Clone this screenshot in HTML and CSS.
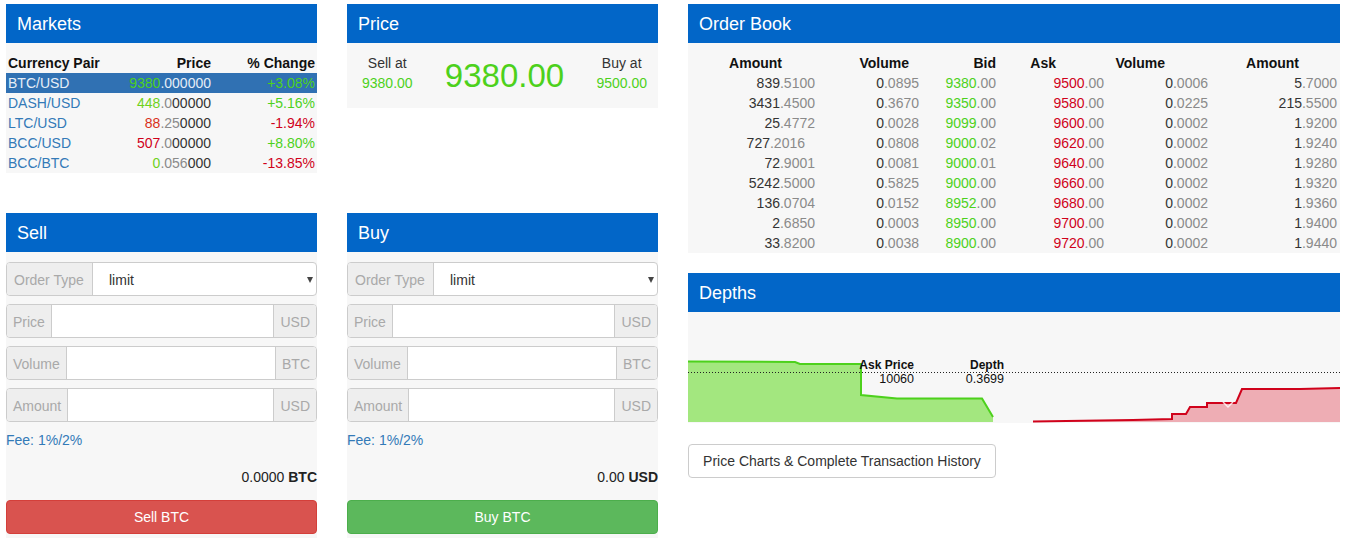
FILE: index.html
```html
<!DOCTYPE html>
<html>
<head>
<meta charset="utf-8">
<link rel="stylesheet" href="styles.css">
</head>
<body>
<div class="page">
  <div class="left">
    <section class="panel markets">
      <div class="panel-head">Markets</div>
      <div class="panel-body">
        <table class="mtable">
          <colgroup><col class="c1"><col class="c2"><col class="c3"></colgroup>
          <thead><tr><th class="l">Currency Pair</th><th>Price</th><th>% Change</th></tr></thead>
          <tbody>
            <tr class="active"><td class="l pair">BTC/USD</td><td><span class="up">9380</span><span class="lite">.000000</span></td><td class="up">+3.08%</td></tr>
            <tr><td class="l pair">DASH/USD</td><td><span class="up2">448</span><span class="dim">.0</span>00000</td><td class="up">+5.16%</td></tr>
            <tr><td class="l pair">LTC/USD</td><td><span class="down2">88</span><span class="dim">.25</span>0000</td><td class="down">-1.94%</td></tr>
            <tr><td class="l pair">BCC/USD</td><td><span class="down">507</span><span class="dim">.0</span>00000</td><td class="up">+8.80%</td></tr>
            <tr><td class="l pair">BCC/BTC</td><td><span class="up2">0</span><span class="dim">.056</span>000</td><td class="down">-13.85%</td></tr>
          </tbody>
        </table>
      </div>
    </section>

    <section class="panel price">
      <div class="panel-head">Price</div>
      <div class="panel-body price-body">
        <div class="quote q-left"><div>Sell at</div><div class="up">9380.00</div></div>
        <div class="big up">9380.00</div>
        <div class="quote q-right"><div>Buy at</div><div class="up">9500.00</div></div>
      </div>
    </section>

    <section class="panel trade">
      <div class="panel-head">Sell</div>
      <div class="panel-body trade-body">
        <div class="igroup"><span class="addon addon-type">Order Type</span><div class="select">limit<span class="caret"></span></div></div>
        <div class="igroup"><span class="addon">Price</span><div class="field"></div><span class="addon addon-r">USD</span></div>
        <div class="igroup"><span class="addon">Volume</span><div class="field"></div><span class="addon addon-r">BTC</span></div>
        <div class="igroup"><span class="addon">Amount</span><div class="field"></div><span class="addon addon-r">USD</span></div>
        <div class="fee">Fee: 1%/2%</div>
        <div class="total">0.0000 <b>BTC</b></div>
        <button class="btn btn-sell">Sell BTC</button>
      </div>
    </section>

    <section class="panel trade">
      <div class="panel-head">Buy</div>
      <div class="panel-body trade-body">
        <div class="igroup"><span class="addon addon-type">Order Type</span><div class="select">limit<span class="caret"></span></div></div>
        <div class="igroup"><span class="addon">Price</span><div class="field"></div><span class="addon addon-r">USD</span></div>
        <div class="igroup"><span class="addon">Volume</span><div class="field"></div><span class="addon addon-r">BTC</span></div>
        <div class="igroup"><span class="addon">Amount</span><div class="field"></div><span class="addon addon-r">USD</span></div>
        <div class="fee">Fee: 1%/2%</div>
        <div class="total">0.00 <b>USD</b></div>
        <button class="btn btn-buy">Buy BTC</button>
      </div>
    </section>
  </div>

  <div class="right">
    <section class="panel book">
      <div class="panel-head">Order Book</div>
      <div class="panel-body">
        <table class="btable">
          <colgroup><col class="b1"><col class="b2"><col class="b3"><col class="b4"><col class="b5"><col class="b6"></colgroup>
          <thead><tr><th class="h1">Amount</th><th class="h2">Volume</th><th class="h3">Bid</th><th class="h4">Ask</th><th class="h5">Volume</th><th class="h6">Amount</th></tr></thead>
          <tbody>
            <tr><td>839<span class="dim">.5100</span></td><td>0<span class="dim">.0895</span></td><td><span class="up">9380</span><span class="dim">.00</span></td><td><span class="down">9500</span><span class="dim">.00</span></td><td>0<span class="dim">.0006</span></td><td class="last">5<span class="dim">.7000</span></td></tr>
            <tr><td>3431<span class="dim">.4500</span></td><td>0<span class="dim">.3670</span></td><td><span class="up">9350</span><span class="dim">.00</span></td><td><span class="down">9580</span><span class="dim">.00</span></td><td>0<span class="dim">.0225</span></td><td class="last">215<span class="dim">.5500</span></td></tr>
            <tr><td>25<span class="dim">.4772</span></td><td>0<span class="dim">.0028</span></td><td><span class="up">9099</span><span class="dim">.00</span></td><td><span class="down">9600</span><span class="dim">.00</span></td><td>0<span class="dim">.0002</span></td><td class="last">1<span class="dim">.9200</span></td></tr>
            <tr><td class="short">727<span class="dim">.2016</span></td><td>0<span class="dim">.0808</span></td><td><span class="up">9000</span><span class="dim">.02</span></td><td><span class="down">9620</span><span class="dim">.00</span></td><td>0<span class="dim">.0002</span></td><td class="last">1<span class="dim">.9240</span></td></tr>
            <tr><td>72<span class="dim">.9001</span></td><td>0<span class="dim">.0081</span></td><td><span class="up">9000</span><span class="dim">.01</span></td><td><span class="down">9640</span><span class="dim">.00</span></td><td>0<span class="dim">.0002</span></td><td class="last">1<span class="dim">.9280</span></td></tr>
            <tr><td>5242<span class="dim">.5000</span></td><td>0<span class="dim">.5825</span></td><td><span class="up">9000</span><span class="dim">.00</span></td><td><span class="down">9660</span><span class="dim">.00</span></td><td>0<span class="dim">.0002</span></td><td class="last">1<span class="dim">.9320</span></td></tr>
            <tr><td>136<span class="dim">.0704</span></td><td>0<span class="dim">.0152</span></td><td><span class="up">8952</span><span class="dim">.00</span></td><td><span class="down">9680</span><span class="dim">.00</span></td><td>0<span class="dim">.0002</span></td><td class="last">1<span class="dim">.9360</span></td></tr>
            <tr><td>2<span class="dim">.6850</span></td><td>0<span class="dim">.0003</span></td><td><span class="up">8950</span><span class="dim">.00</span></td><td><span class="down">9700</span><span class="dim">.00</span></td><td>0<span class="dim">.0002</span></td><td class="last">1<span class="dim">.9400</span></td></tr>
            <tr><td>33<span class="dim">.8200</span></td><td>0<span class="dim">.0038</span></td><td><span class="up">8900</span><span class="dim">.00</span></td><td><span class="down">9720</span><span class="dim">.00</span></td><td>0<span class="dim">.0002</span></td><td class="last">1<span class="dim">.9440</span></td></tr>
          </tbody>
        </table>
      </div>
    </section>

    <section class="panel depths">
      <div class="panel-head">Depths</div>
      <div class="chart">
        <svg class="chart-svg" width="652" height="111" viewBox="0 0 652 111">
          <polygon points="0,49.5 107,50 112,52 173,52 173,83 209,86.5 294,86.5 305,105 305,110 0,110" fill="#a3e77f"/>
          <polyline points="0,49.5 107,50 112,52 173,52 173,83 209,86.5 294,86.5 305,105" fill="none" stroke="#4dd11c" stroke-width="2"/>
          <polygon points="345,109.5 445,108 484,107 484,102 498,102 502,95 519,95 519,91 548,91 554,77 612,77 652,76 652,110 345,110" fill="#eeadb4"/>
          <polyline points="345,109.5 445,108 484,107 484,102 498,102 502,95 519,95 519,91 548,91 554,77 612,77 652,76" fill="none" stroke="#d0021b" stroke-width="2"/>
          <line x1="0" y1="60.5" x2="652" y2="60.5" stroke="#222" stroke-width="1" stroke-dasharray="1 2"/>
          <polyline points="535,90 540,95 545,90" fill="none" stroke="#fff" stroke-width="1.5" opacity="0.8"/>
        </svg>
        <div class="tip">
          <b>Ask Price</b><b>Depth</b>
          <span>10060</span><span>0.3699</span>
        </div>
      </div>
    </section>

    <div class="history-row"><button class="btn btn-default">Price Charts &amp; Complete Transaction History</button></div>
  </div>
</div>
</body>
</html>
```

FILE: styles.css
```css
* { box-sizing: border-box; }
html, body { margin: 0; background: #fff; }
body {
  font-family: "Liberation Sans", Arial, Helvetica, sans-serif;
  font-size: 14px;
  color: #333;
  line-height: 20px;
}
.page {
  display: flex;
  gap: 30px;
  padding: 4px 6px 0;
  align-items: flex-start;
}
.left {
  display: grid;
  grid-template-columns: 311px 311px;
  grid-template-rows: 169px auto;
  column-gap: 30px;
  row-gap: 40px;
  align-items: start;
}
.right {
  width: 652px;
  display: flex;
  flex-direction: column;
}
.panel-head {
  height: 39px;
  background: #0266c8;
  color: #fff;
  font-size: 18px;
  display: flex;
  align-items: center;
  padding-left: 11px;
}
.panel-body { background: #f7f7f7; }

.up { color: #4dd11c; }
.up2 { color: #6fd11c; }
.down { color: #d0021b; }
.down2 { color: #d9301b; }
.dim { color: #8a8a8a; }
.lite { color: #e6eef7; }

/* Markets */
.markets .panel-body { padding-top: 10px; }
.mtable { width: 100%; border-collapse: collapse; table-layout: fixed; }
.mtable .c1 { width: 100px; }
.mtable .c2 { width: 107px; }
.mtable .c3 { width: 104px; }
.mtable th, .mtable td {
  padding: 0 2px;
  height: 20px;
  line-height: 20px;
  text-align: right;
  white-space: nowrap;
}
.mtable th { font-weight: bold; color: #111; }
.mtable .l { text-align: left; }
.mtable .pair { color: #337ab7; }
.mtable tr.active td { background: #3071b3; }
.mtable tr.active .pair { color: #e6eef7; }

/* Price */
.price-body {
  display: grid;
  grid-template-columns: 1fr auto 1fr;
  padding: 10px 11px 14px 15px;
}
.quote { text-align: center; line-height: 20px; }
.q-left { justify-self: start; }
.q-right { justify-self: end; }
.big {
  font-size: 33px;
  line-height: 36px;
  align-self: center;
  margin-top: 5px;
}

/* Trade */
.trade-body { padding: 10px 0 4px; }
.igroup {
  display: flex;
  height: 34px;
  border: 1px solid #ccc;
  border-radius: 4px;
  overflow: hidden;
  background: #fff;
  margin-bottom: 8px;
}
.addon {
  background: #eee;
  color: #a9a9a9;
  padding: 1px 6px 0;
  display: flex;
  align-items: center;
  border-right: 1px solid #ccc;
  white-space: nowrap;
}
.addon-type { padding: 1px 7px 0 7px; width: 86px; }
.addon-r { border-right: 0; border-left: 1px solid #ccc; }
.field { flex: 1; background: #fff; }
.select {
  flex: 1;
  display: flex;
  align-items: center;
  padding: 1px 0 0 16px;
  color: #333;
  position: relative;
}
.caret {
  position: absolute;
  right: 3px;
  top: 14px;
  width: 0; height: 0;
  border-left: 3.5px solid transparent;
  border-right: 3.5px solid transparent;
  border-top: 6px solid #444;
}
.fee { color: #337ab7; line-height: 20px; margin-top: 1px; }
.total { text-align: right; margin-top: 17px; color: #222; }
.total b { color: #222; }
.btn {
  font-family: inherit;
  font-size: 14px;
  height: 34px;
  border-radius: 4px;
  cursor: pointer;
}
.btn-sell, .btn-buy {
  display: block;
  width: 100%;
  margin-top: 13px;
  color: #fff;
}
.btn-sell { background: #d9534f; border: 1px solid #d43f3a; }
.btn-buy { background: #5cb85c; border: 1px solid #4cae4c; }

/* Order book */
.book .panel-body { padding-top: 10px; }
.btable { width: 100%; border-collapse: collapse; table-layout: fixed; }
.btable .b1 { width: 127px; }
.btable .b2 { width: 104px; }
.btable .b3 { width: 77px; }
.btable .b4 { width: 108px; }
.btable .b5 { width: 104px; }
.btable .b6 { width: 132px; }
.btable th, .btable td {
  padding: 0;
  height: 20px;
  line-height: 20px;
  text-align: right;
  white-space: nowrap;
}
.btable th { font-weight: bold; color: #111; }
.btable td { color: #333; }
.btable .h1 { padding-right: 33px; }
.btable .h2 { padding-right: 10px; }
.btable .h3 { padding-right: 0; }
.btable .h4 { padding-right: 48px; }
.btable .h5 { padding-right: 43px; }
.btable .h6 { padding-right: 41px; }
.btable td.last { padding-right: 3px; }
.btable td.short { padding-right: 10px; }

/* Depths */
.depths { margin-top: 20px; }
.chart {
  position: relative;
  height: 111px;
  background: #f7f7f7;
}
.chart-svg { display: block; }
.tip {
  position: absolute;
  left: 170px;
  top: 46px;
  display: grid;
  grid-template-columns: 56px 90px;
  text-align: right;
  line-height: 14px;
  color: #111;
}
.tip b { font-size: 12px; }
.tip span { font-size: 12.5px; }

.history-row { margin-top: 21px; }
.btn-default {
  width: 308px;
  background: #fff;
  border: 1px solid #ccc;
  color: #333;
  padding: 0 12px;
}
```
